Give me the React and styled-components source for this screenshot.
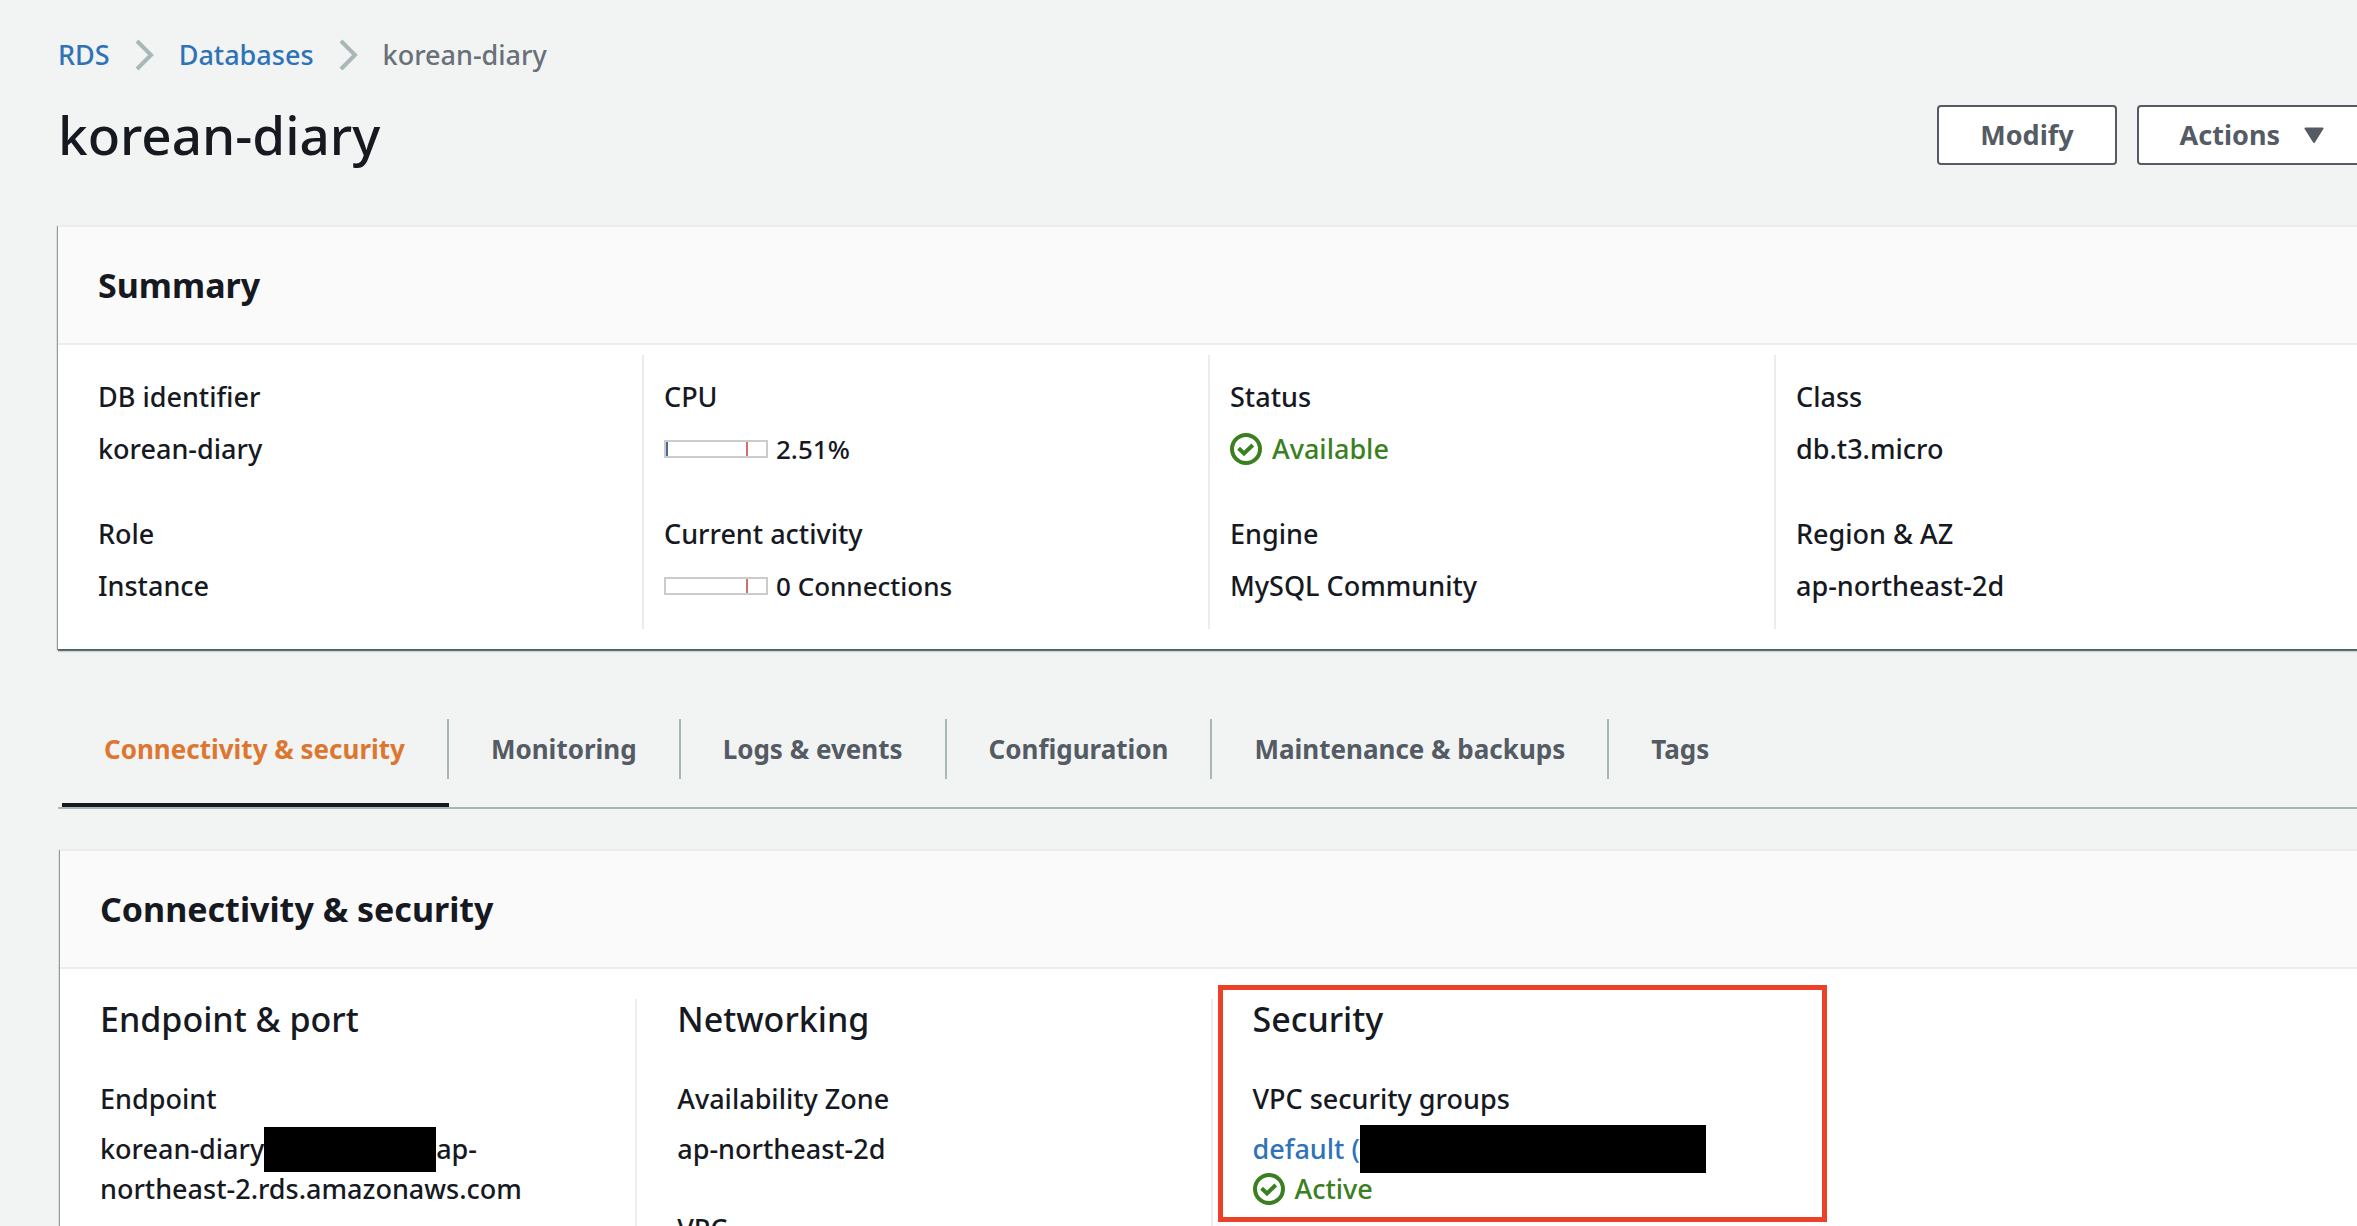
import React from "react";
import styled, { createGlobalStyle } from "styled-components";

const GlobalStyle = createGlobalStyle`
  *, *::before, *::after { box-sizing: border-box; }
  body {
    margin: 0;
    background: #f2f3f3;
    color: #16191f;
    font-family: "Noto Sans", "Open Sans", sans-serif;
    font-size: 27px;
    font-weight: 500;
    line-height: 40px;
  }
  h1, h2, h3, dl, dd, ol { margin: 0; padding: 0; }
`;

const Page = styled.main`
  height: 100vh;
  overflow: hidden;
  padding: 35px 0 0 58px;
`;

const Crumbs = styled.ol`
  display: flex;
  align-items: center;
  gap: 24px;
  list-style: none;
  color: #687078;
`;

const Crumb = styled.li`
  display: flex;
  align-items: center;
  gap: 25px;
`;

const Link = styled.a`
  color: #2e73b8;
  text-decoration: none;
`;

const Header = styled.header`
  display: flex;
  align-items: center;
  justify-content: space-between;
  margin: 30px -10px 60px 0;
`;

const Title = styled.h1`
  font-size: 53px;
  line-height: 60px;
  font-weight: 500;
`;

const Actions = styled.div`
  display: flex;
  gap: 20px;
`;

const Button = styled.button`
  display: flex;
  align-items: center;
  gap: 24px;
  height: 60px;
  padding: 0 41px;
  border: 2px solid #545b64;
  border-radius: 4px;
  background: #fff;
  color: #545b64;
  font: inherit;
  font-weight: 700;
`;

const Panel = styled.section`
  margin: 0 -4px 0 ${(p) => (p.$inset ? "2px" : "0")};
  border-top: 2px solid #eaeded;
  background: #fff;
  box-shadow: 0 2px 2px 0 rgba(0, 28, 36, 0.45), 0 2px 0 0 #879596, -1px 1px 1px 0 rgba(0, 28, 36, 0.3);
`;

const PanelHeader = styled.div`
  padding: 38px 40px;
  border-bottom: 2px solid #eaeded;
  background: #fafafa;
`;

const PanelTitle = styled.h2`
  font-size: 34px;
  line-height: 40px;
  font-weight: 700;
`;

const SummaryGrid = styled.div`
  display: grid;
  grid-template-columns: repeat(4, 1fr);
  padding: 10px 21px 20px 18px;
`;

const SummaryColumn = styled.dl`
  display: flex;
  flex-direction: column;
  gap: 45px;
  padding: 22px 20px 23px;
  border-left: 2px solid ${(p) => (p.$first ? "transparent" : "#eaeded")};
`;

const Field = styled.div`
  display: flex;
  flex-direction: column;
  gap: ${(p) => p.$gap || 12}px;
`;

const Line = styled.span`
  display: flex;
  align-items: center;
  height: 40px;
  gap: ${(p) => p.$gap || 0}px;
  color: ${(p) => (p.$ok ? "#3a8020" : "inherit")};
`;

const Meter = styled.span`
  display: flex;
  justify-content: space-between;
  width: 104px;
  height: 18px;
  padding-right: 18px;
  border: 2px solid #ccc;
`;

const Tick = styled.span`
  width: 2px;
  background: ${(p) => p.$color};
`;

const MeterText = styled.span`
  font-size: 26px;
`;

const Tabs = styled.div`
  display: flex;
  margin: 70px 0 40px;
  padding-left: 4px;
  border-bottom: 2px solid #aab7b8;
`;

const Tab = styled.button`
  padding: 0 0 24px;
  border: 0;
  border-bottom: 4px solid ${(p) => (p.$active ? "#16191f" : "transparent")};
  background: none;
  color: ${(p) => (p.$active ? "#dd7730" : "#545b64")};
  font: inherit;
  font-size: 26px;
  font-weight: 700;
`;

const TabLabel = styled.span`
  display: block;
  padding: 0 42px;
  line-height: 60px;
  border-right: 2px solid ${(p) => (p.$last ? "transparent" : "#aab7b8")};
`;

const DetailGrid = styled.div`
  display: grid;
  grid-template-columns: repeat(4, 1fr);
  padding-top: 30px;
`;

const DetailColumn = styled.div`
  position: relative;
  display: flex;
  flex-direction: column;
  gap: 40px;
  min-height: 320px;
  padding: 0 40px;
  border-left: ${(p) => (p.$plain ? "0" : "2px solid #eaeded")};
`;

const ColumnTitle = styled.h3`
  font-size: 34px;
  line-height: 40px;
  font-weight: 500;
`;

const Redaction = styled.span`
  flex: none;
  width: ${(p) => p.$width}px;
  height: ${(p) => p.$height}px;
  background: #000;
`;

const Highlight = styled.div`
  position: absolute;
  top: -14px;
  left: 5px;
  width: 609px;
  height: 237px;
  border: 5px solid #ea4128;
  pointer-events: none;
`;

const Chevron = () => (
  <svg width="20" height="32" viewBox="0 0 20 32" fill="none" stroke="#aab7b8" strokeWidth="4" aria-hidden="true">
    <path d="M2 2 L16 16 L2 30" />
  </svg>
);

const Caret = () => (
  <svg width="20" height="16" viewBox="0 0 20 16" fill="#545b64" stroke="#545b64" strokeWidth="2" strokeLinejoin="round" aria-hidden="true">
    <path d="M1.5 1.5 H18.5 L10 15 Z" />
  </svg>
);

const CheckIcon = () => (
  <svg width="32" height="32" viewBox="0 0 16 16" fill="none" stroke="#3a8020" strokeWidth="2" aria-hidden="true">
    <circle cx="8" cy="8" r="7" />
    <path d="M4.3 7.6 L7 10.2 L11.4 6" />
  </svg>
);

const summary = [
  [
    { label: "DB identifier", value: "korean-diary" },
    { label: "Role", value: "Instance" },
  ],
  [
    { label: "CPU", value: "2.51%", meter: true, used: true },
    { label: "Current activity", value: "0 Connections", meter: true },
  ],
  [
    { label: "Status", value: "Available", ok: true },
    { label: "Engine", value: "MySQL Community" },
  ],
  [
    { label: "Class", value: "db.t3.micro" },
    { label: "Region & AZ", value: "ap-northeast-2d" },
  ],
];

const tabs = [
  "Connectivity & security",
  "Monitoring",
  "Logs & events",
  "Configuration",
  "Maintenance & backups",
  "Tags",
];

function SummaryValue({ item }) {
  if (item.meter) {
    return (
      <Line $gap={8}>
        <Meter>
          <Tick $color={item.used ? "#4c6a92" : "transparent"} />
          <Tick $color="#d0706a" />
        </Meter>
        <MeterText>{item.value}</MeterText>
      </Line>
    );
  }
  if (item.ok) {
    return (
      <Line $ok $gap={10}>
        <CheckIcon />
        {item.value}
      </Line>
    );
  }
  return <Line>{item.value}</Line>;
}

export default function App() {
  return (
    <>
      <GlobalStyle />
      <Page>
        <nav aria-label="Breadcrumb">
          <Crumbs>
            <Crumb><Link href="#rds">RDS</Link><Chevron /></Crumb>
            <Crumb><Link href="#databases">Databases</Link><Chevron /></Crumb>
            <Crumb>korean-diary</Crumb>
          </Crumbs>
        </nav>

        <Header>
          <Title>korean-diary</Title>
          <Actions>
            <Button type="button">Modify</Button>
            <Button type="button">Actions<Caret /></Button>
          </Actions>
        </Header>

        <Panel>
          <PanelHeader><PanelTitle>Summary</PanelTitle></PanelHeader>
          <SummaryGrid>
            {summary.map((column, i) => (
              <SummaryColumn key={i} $first={i === 0}>
                {column.map((item) => (
                  <Field key={item.label}>
                    <dt>{item.label}</dt>
                    <dd><SummaryValue item={item} /></dd>
                  </Field>
                ))}
              </SummaryColumn>
            ))}
          </SummaryGrid>
        </Panel>

        <Tabs role="tablist">
          {tabs.map((name, i) => (
            <Tab key={name} type="button" role="tab" aria-selected={i === 0} $active={i === 0}>
              <TabLabel $last={i === tabs.length - 1}>{name}</TabLabel>
            </Tab>
          ))}
        </Tabs>

        <Panel $inset>
          <PanelHeader><PanelTitle>Connectivity &amp; security</PanelTitle></PanelHeader>
          <DetailGrid>
            <DetailColumn $plain>
              <ColumnTitle>Endpoint &amp; port</ColumnTitle>
              <Field $gap={10}>
                <span>Endpoint</span>
                <div>
                  <Line>korean-diary<Redaction $width={172} $height={45} />ap-</Line>
                  <Line>northeast-2.rds.amazonaws.com</Line>
                </div>
              </Field>
            </DetailColumn>
            <DetailColumn>
              <ColumnTitle>Networking</ColumnTitle>
              <Field $gap={10}>
                <span>Availability Zone</span>
                <Line>ap-northeast-2d</Line>
              </Field>
              <Field $gap={10}>
                <span>VPC</span>
              </Field>
            </DetailColumn>
            <DetailColumn>
              <ColumnTitle>Security</ColumnTitle>
              <Field $gap={10}>
                <span>VPC security groups</span>
                <div>
                  <Line><Link href="#security-group">default (</Link><Redaction $width={346} $height={48} /></Line>
                  <Line $ok $gap={10}><CheckIcon />Active</Line>
                </div>
              </Field>
              <Highlight />
            </DetailColumn>
          </DetailGrid>
        </Panel>
      </Page>
    </>
  );
}
